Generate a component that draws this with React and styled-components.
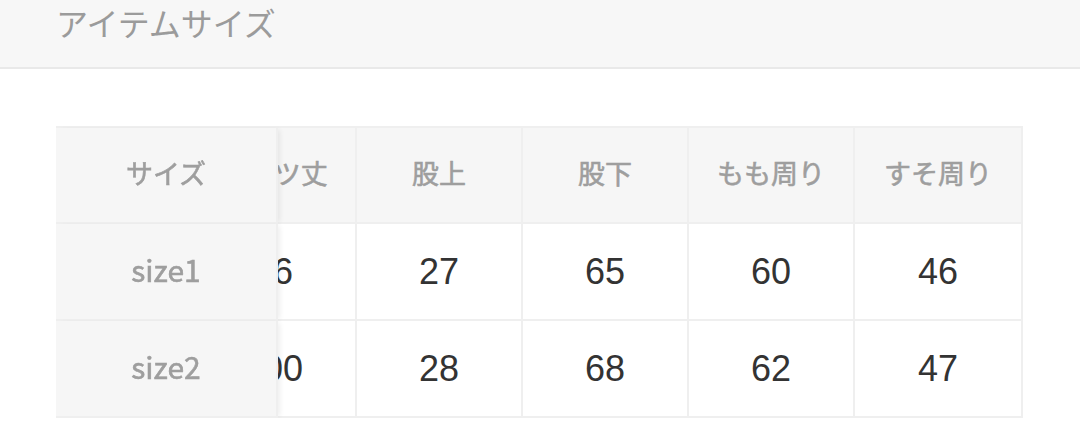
import React, { useLayoutEffect, useRef } from "react";
import styled, { createGlobalStyle } from "styled-components";

const GlobalStyle = createGlobalStyle`
  html, body { margin: 0; padding: 0; background: #ffffff; }
  body { font-family: "Noto Sans CJK JP", "Liberation Sans", sans-serif; }
`;

const Page = styled.div`
  width: 1080px;
  height: 448px;
  overflow: hidden;
  background: #ffffff;
`;

const Header = styled.header`
  height: 67px;
  background: #f7f7f7;
  border-bottom: 2px solid #e9e9e9;
  padding-left: 56px;
  box-sizing: content-box;
`;

const Title = styled.h2`
  margin: 0;
  padding-top: 1px;
  font-family: "Noto Sans CJK JP", sans-serif;
  font-weight: 400;
  font-size: 32px;
  line-height: 42px;
  color: #9b9b9b;
`;

const Section = styled.section`
  padding: 57px 57px 0 56px;
`;

const Scroller = styled.div`
  width: 967px;
  overflow-x: auto;
  scrollbar-width: none;
  &::-webkit-scrollbar { display: none; }
`;

const Table = styled.table`
  border-collapse: separate;
  border-spacing: 0;
  table-layout: fixed;
  width: 1054px;
  border-top: 2px solid #efefef;
  border-left: 2px solid #efefef;
`;

const Cell = styled.td`
  box-sizing: border-box;
  width: ${(p) => p.$w}px;
  height: ${(p) => p.$h || 97}px;
  padding: 0;
  text-align: center;
  vertical-align: middle;
  border-right: 2px solid #efefef;
  border-bottom: 2px solid #efefef;
  background: #ffffff;
  color: #333333;
  font-family: "Liberation Sans", Arial, sans-serif;
  font-size: 36px;
  font-weight: 400;
  white-space: nowrap;
`;

const HeadCell = styled(Cell).attrs({ as: "th" })`
  padding-bottom: 6px;
  background: #f6f6f6;
  color: #9e9e9e;
  font-family: "Noto Sans CJK JP", sans-serif;
  font-size: 27px;
  font-weight: 400;
  -webkit-text-stroke: 0.6px currentColor;
`;

const StickyCell = styled(Cell).attrs({ as: "th" })`
  position: sticky;
  left: 0;
  z-index: 2;
  padding-bottom: 6px;
  background: #f6f6f6;
  color: #9e9e9e;
  font-family: "Noto Sans CJK JP", "Liberation Sans", sans-serif;
  font-size: ${(p) => (p.$label ? 30 : 27)}px;
  font-weight: 400;
  -webkit-text-stroke: 0.6px currentColor;
  box-shadow: 4px 0 5px -2px rgba(0, 0, 0, 0.07);
`;

const columns = ["パンツ丈", "股上", "股下", "もも周り", "すそ周り"];
const widths = [166, 166, 166, 166, 168];
const rows = [
  { name: "size1", values: ["96", "27", "65", "60", "46"] },
  { name: "size2", values: ["100", "28", "68", "62", "47"] },
];

export default function App() {
  const ref = useRef(null);
  useLayoutEffect(() => {
    if (ref.current) ref.current.scrollLeft = 9999;
  }, []);
  return (
    <Page>
      <GlobalStyle />
      <Header>
        <Title>アイテムサイズ</Title>
      </Header>
      <Section>
        <Scroller ref={ref}>
          <Table>
            <thead>
              <tr>
                <StickyCell $w={222} $h={96}>サイズ</StickyCell>
                {columns.map((c, i) => (
                  <HeadCell key={c} $w={widths[i]} $h={96}>
                    {c}
                  </HeadCell>
                ))}
              </tr>
            </thead>
            <tbody>
              {rows.map((r) => (
                <tr key={r.name}>
                  <StickyCell $w={222} $label>
                    {r.name}
                  </StickyCell>
                  {r.values.map((v, i) => (
                    <Cell key={i} $w={widths[i]}>
                      {v}
                    </Cell>
                  ))}
                </tr>
              ))}
            </tbody>
          </Table>
        </Scroller>
      </Section>
    </Page>
  );
}
